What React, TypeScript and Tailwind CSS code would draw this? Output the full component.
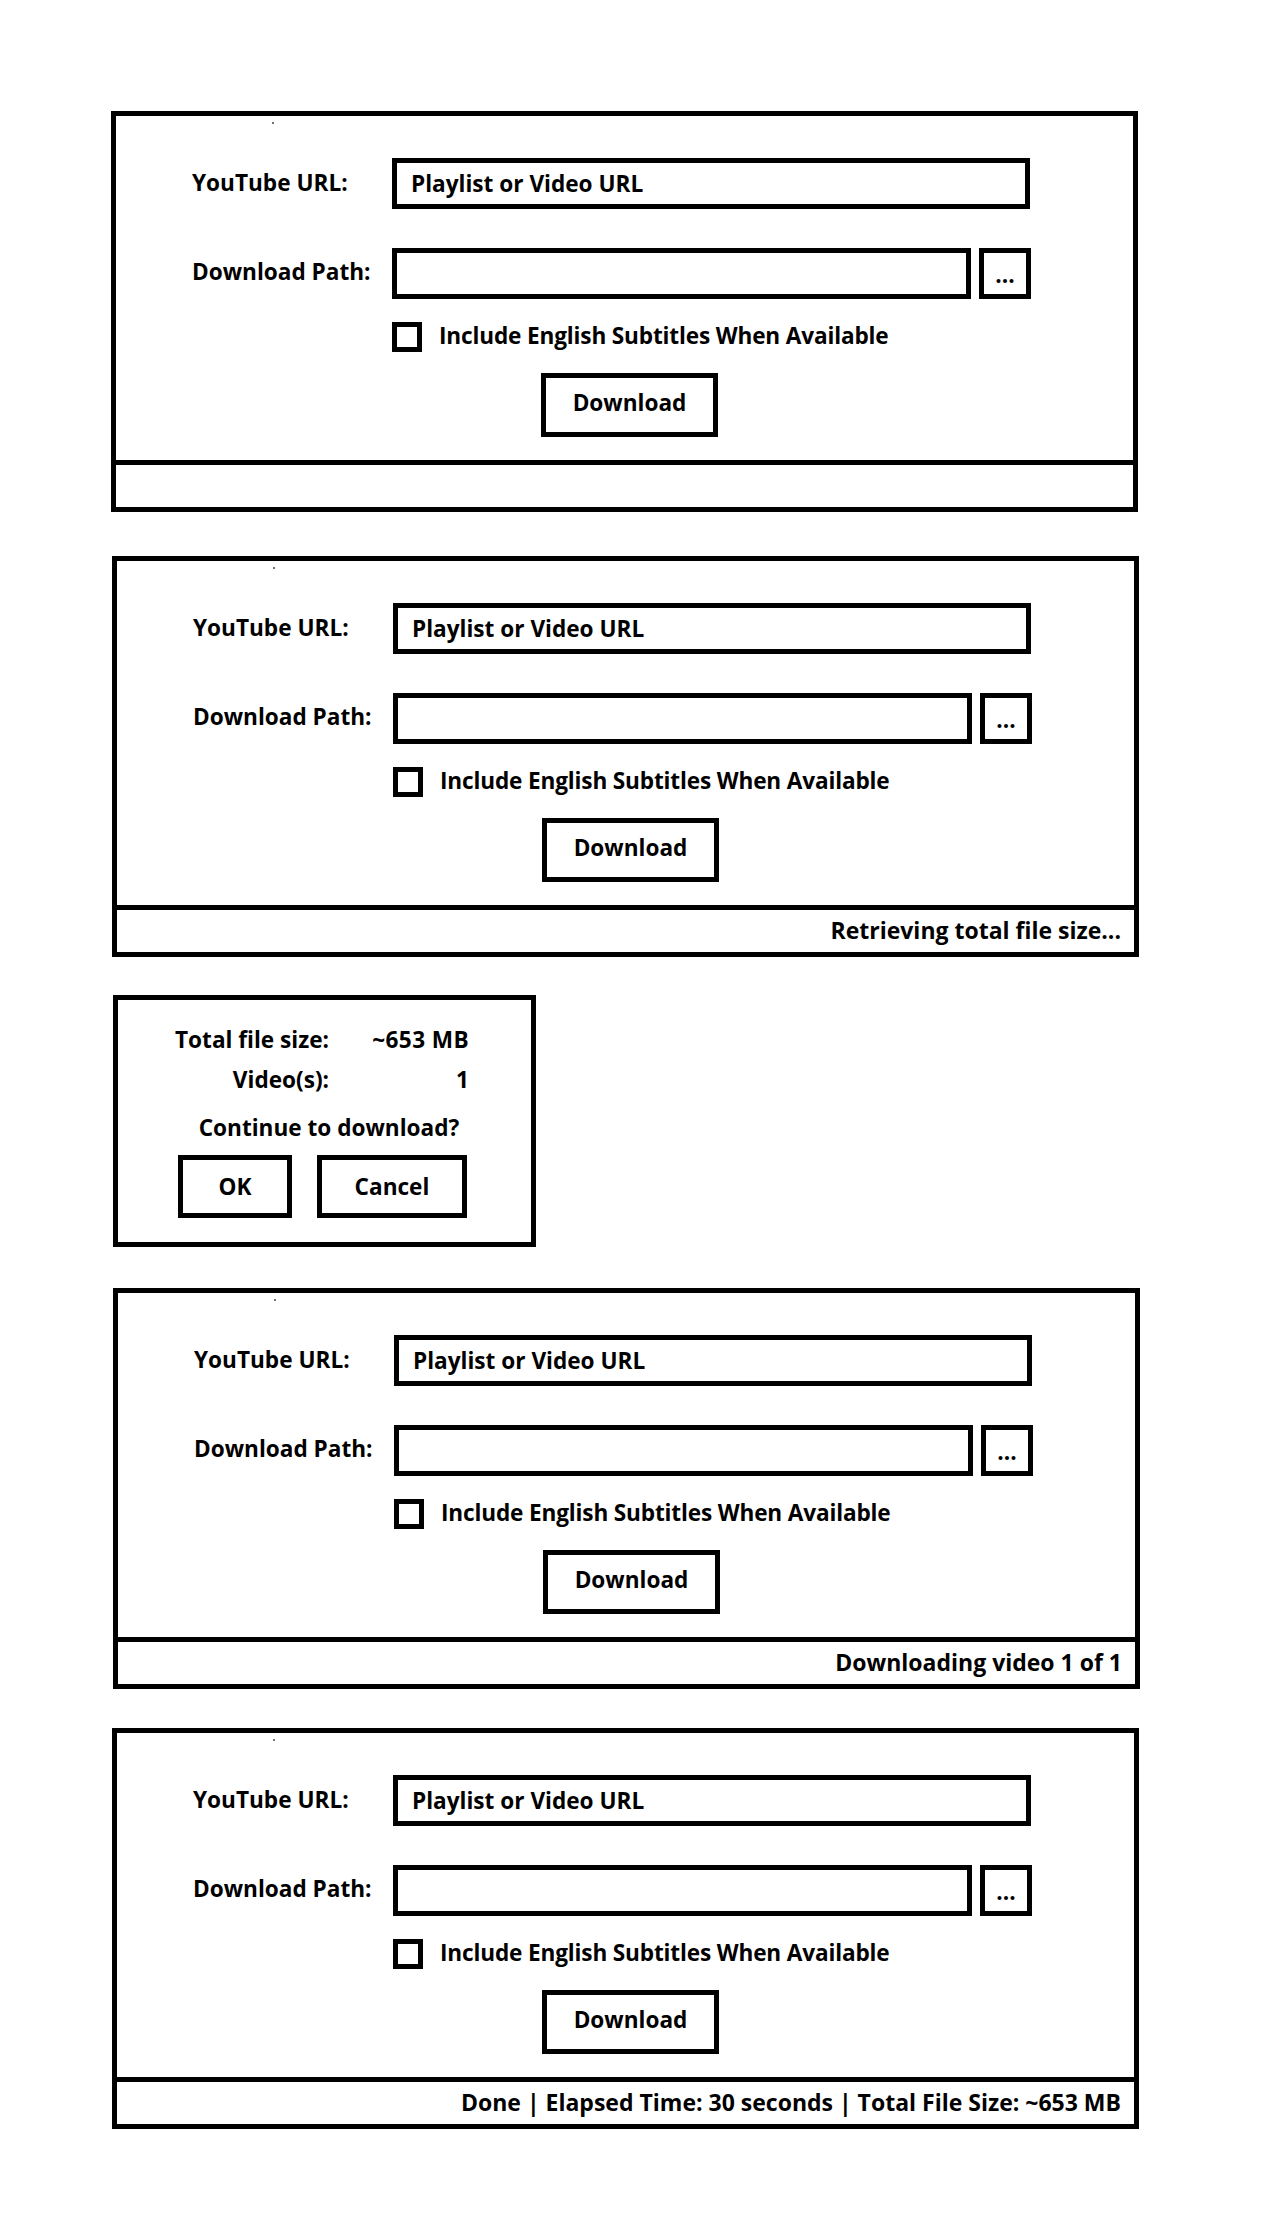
import React from "react";

const font = "font-['Open_Sans',sans-serif] font-bold text-black";

// one downloader window, status line differs per state
const DownloaderPanel: React.FC<{ status?: string; className?: string }> = ({ status, className }) => {
  return (
    <div className={`relative w-[1027px] h-[401px] border-[5px] border-black bg-white flex flex-col ${className ?? ""}`}>
      {/* stray pixel from the mockup */}
      <span className="absolute left-[156px] top-[6px] w-[2px] h-[2px] bg-gray-500" />

      <div className="flex-1 pt-[42px] pl-[76px] text-[22.6px]">
        {/* URL row */}
        <div className="flex items-center">
          <label className="w-[200px] leading-[28px] -mt-[2px]">YouTube URL:</label>
          <input
            className="w-[638px] h-[51px] border-[5px] border-black px-[14px] outline-none placeholder:text-black"
            placeholder="Playlist or Video URL"
          />
        </div>

        {/* Path row */}
        <div className="flex items-center mt-[39px]">
          <label className="w-[200px] leading-[28px] -mt-[3px]">Download Path:</label>
          <input className="w-[579px] h-[51px] border-[5px] border-black px-[14px] outline-none" />
          <button className="ml-[8px] w-[52px] h-[51px] border-[5px] border-black leading-none pt-[4px]">
            ...
          </button>
        </div>

        {/* Subtitles */}
        <div className="flex items-center mt-[23px] ml-[200px]">
          <input type="checkbox" className="appearance-none w-[30px] h-[30px] border-[5px] border-black" />
          <span className="ml-[17px] leading-[28px] -mt-[2px] tracking-[-0.15px]">
            Include English Subtitles When Available
          </span>
        </div>

        <button className="mt-[21px] ml-[349px] w-[177px] h-[64px] border-[5px] border-black pb-[5px]">
          Download
        </button>
      </div>

      <div className="h-[47px] border-t-[5px] border-black flex items-center justify-end pr-[13px] pb-[2px] text-[23px]">
        {status}
      </div>
    </div>
  );
};

const ConfirmDialog: React.FC = () => {
  return (
    <div className="w-[423px] h-[252px] border-[5px] border-black bg-white text-[22.6px] leading-[28px]">
      <div className="grid grid-cols-[211px_140px] pt-[26px]">
        <span className="text-right">Total file size:</span>
        <span className="text-right tracking-[0.4px]">~653 MB</span>
        <span className="text-right mt-[12px]">Video(s):</span>
        <span className="text-right mt-[12px]">1</span>
      </div>
      <p className="mt-[20px] text-center pl-[9px]">Continue to download?</p>
      <div className="flex gap-[25px] mt-[13px] pl-[60px]">
        <button className="w-[114px] h-[63px] border-[5px] border-black">OK</button>
        <button className="w-[150px] h-[63px] border-[5px] border-black">Cancel</button>
      </div>
    </div>
  );
};

export default function App() {
  return (
    <div className={`w-[1268px] min-h-[2240px] bg-white pt-[111px] ${font}`}>
      <DownloaderPanel className="ml-[111px]" />
      <DownloaderPanel className="ml-[112px] mt-[44px]" status="Retrieving total file size..." />
      <div className="ml-[113px] mt-[38px]">
        <ConfirmDialog />
      </div>
      <DownloaderPanel className="ml-[113px] mt-[41px]" status="Downloading video 1 of 1" />
      <DownloaderPanel
        className="ml-[112px] mt-[39px]"
        status="Done | Elapsed Time: 30 seconds | Total File Size: ~653 MB"
      />
    </div>
  );
}
